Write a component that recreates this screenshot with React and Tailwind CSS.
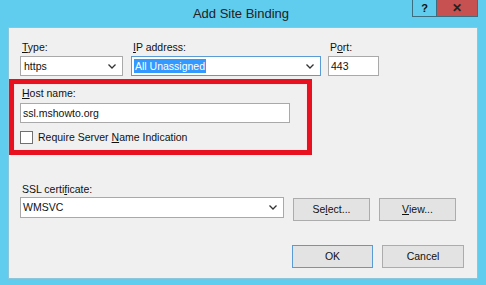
import React from "react";

const font = { fontFamily: '"Liberation Sans", Arial, sans-serif' };

const Chevron = () => (
  <svg width="8" height="5" viewBox="0 0 8 5" className="shrink-0">
    <path d="M0.5 0.5 L4 4 L7.5 0.5" fill="none" stroke="#333" strokeWidth="1.3" />
  </svg>
);

const Select = ({ width, value, focused }) => (
  <div
    className={`flex items-center h-[20px] pl-[2px] pr-[6px] bg-white border ${
      focused ? "border-[#5b9bd5]" : "border-[#a9a9a9]"
    } ${width}`}
  >
    <div className="flex-1 min-w-0">
      {focused ? (
        <span className="bg-[#3399ff] text-white px-[1px] py-[1px]">{value}</span>
      ) : (
        <span className="px-[1px]">{value}</span>
      )}
    </div>
    <Chevron />
  </div>
);

const Button = ({ children, width, primary }) => (
  <div
    className={`flex items-center justify-center h-[23px] bg-[#e3e3e3] border ${
      primary ? "border-[#5b9bd5]" : "border-[#acacac]"
    } ${width}`}
  >
    {children}
  </div>
);

export default function App() {
  return (
    <div
      className="w-[486px] h-[285px] bg-[#60cdee] text-[10.5px] leading-[15px] text-[#111] overflow-hidden"
      style={font}
    >
      {/* title bar */}
      <div className="flex h-[27px] items-start">
        <div className="flex-1 text-center pl-[70px] pt-[5px] text-[13px] leading-[17px] text-[#222]">
          Add Site Binding
        </div>
        <div className="flex h-[17px]">
          <div className="w-[25px] h-[17px] border border-[#3d6e80] border-t-0 flex items-center justify-center text-[11px] font-bold">
            ?
          </div>
          <div className="w-[41px] h-[17px] bg-[#c75050] border border-[#3d6e80] border-t-0 border-l-0 flex items-center justify-center text-[12px] font-bold text-[#222]">
            ✕
          </div>
        </div>
        <div className="w-[8px]" />
      </div>

      {/* client area */}
      <div className="ml-[8px] w-[470px] h-[252px] bg-[#f0f0f0] border border-[#8cc6da]">
        <div className="flex pt-[12px] pl-[11px]">
          <div className="w-[103px]">
            <div className="h-[16px] pl-[2px]">
              <span className="underline">T</span>ype:
            </div>
            <Select width="w-[103px]" value="https" />
          </div>
          <div className="w-[190px] ml-[8px]">
            <div className="h-[16px] pl-[2px]">
              <span className="underline">I</span>P address:
            </div>
            <Select width="w-[190px]" value="All Unassigned" focused />
          </div>
          <div className="w-[51px] ml-[7px]">
            <div className="h-[16px] pl-[2px]">
              P<span className="underline">o</span>rt:
            </div>
            <div className="h-[20px] leading-[18px] bg-white border border-[#a9a9a9] pl-[2px]">443</div>
          </div>
        </div>

        {/* highlighted group */}
        <div className="mt-[3px] w-[303px] h-[76px] border-[5px] border-[#e8111f]">
          <div className="h-full border border-[#fbe5e6] pl-[5px] pt-[1px]">
            <div className="h-[16px] pl-[2px]">
              <span className="underline">H</span>ost name:
            </div>
            <div className="mt-[1px] w-[270px] h-[20px] leading-[18px] bg-white border border-[#a9a9a9] pl-[2px]">
              ssl.mshowto.org
            </div>
            <div className="flex items-center mt-[7px]">
              <div className="w-[13px] h-[13px] bg-white border border-[#707070]" />
              <div className="ml-[5px]">
                Require Server <span className="underline">N</span>ame Indication
              </div>
            </div>
          </div>
        </div>

        <div className="mt-[27px] pl-[11px]">
          <div className="h-[15px] pl-[2px]">
            SSL certi<span className="underline">f</span>icate:
          </div>
          <div className="flex items-start">
            <div className="h-[21px] w-[264px] flex items-center bg-white border border-[#a9a9a9] pl-[2px] pr-[6px]">
              <div className="flex-1">WMSVC</div>
              <Chevron />
            </div>
            <div className="ml-[9px] mt-[1px]">
              <Button width="w-[77px]">
                Se<span className="underline">l</span>ect...
              </Button>
            </div>
            <div className="ml-[9px] mt-[1px]">
              <Button width="w-[77px]">
                <span className="underline">V</span>iew...
              </Button>
            </div>
          </div>
        </div>

        <div className="flex justify-end gap-[9px] mt-[24px] pr-[13px]">
          <Button width="w-[81px]" primary>
            OK
          </Button>
          <Button width="w-[82px]">Cancel</Button>
        </div>
      </div>
    </div>
  );
}
